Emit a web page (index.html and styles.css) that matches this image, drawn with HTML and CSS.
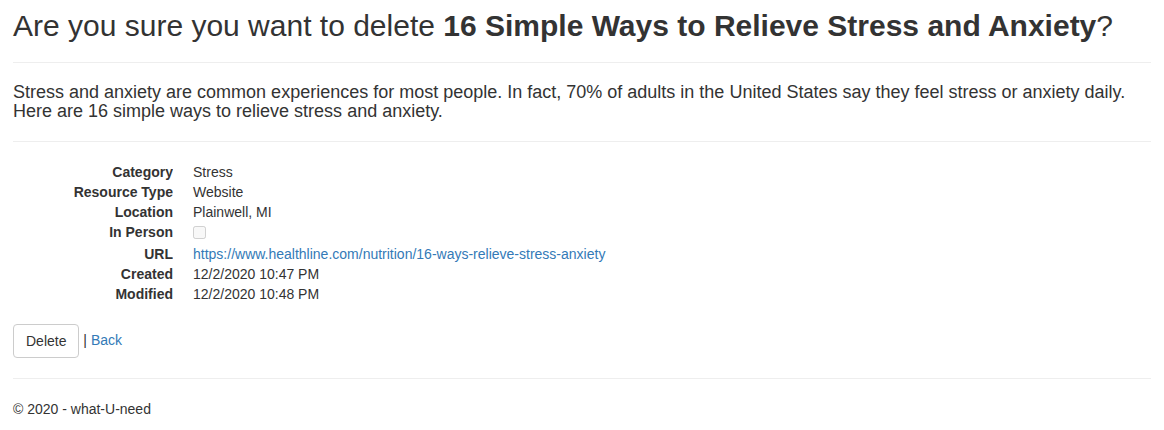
FILE: index.html
```html
<!DOCTYPE html>
<html>
<head>
<meta charset="utf-8">
<title>Delete</title>
<link rel="stylesheet" href="styles.css">
</head>
<body>
<div class="page">
  <h2 class="title">Are you sure you want to delete <strong>16 Simple Ways to Relieve Stress and Anxiety</strong>?</h2>
  <hr>
  <h4 class="desc">Stress and anxiety are common experiences for most people. In fact, 70% of adults in the United States say they feel stress or anxiety daily. Here are 16 simple ways to relieve stress and anxiety.</h4>
  <hr>
  <dl class="details">
    <dt>Category</dt><dd>Stress</dd>
    <dt>Resource Type</dt><dd>Website</dd>
    <dt>Location</dt><dd>Plainwell, MI</dd>
    <dt>In Person</dt><dd><input class="check" type="checkbox" disabled></dd>
    <dt>URL</dt><dd><a href="#">https://www.healthline.com/nutrition/16-ways-relieve-stress-anxiety</a></dd>
    <dt>Created</dt><dd>12/2/2020 10:47 PM</dd>
    <dt>Modified</dt><dd>12/2/2020 10:48 PM</dd>
  </dl>
  <form class="actions">
    <button type="button" class="btn">Delete</button> | <a href="#">Back</a>
  </form>
  <hr>
  <footer class="footer">
    <p>&copy; 2020 - what-U-need</p>
  </footer>
</div>
</body>
</html>
```

FILE: styles.css
```css
html, body {
  margin: 0;
  padding: 0;
  background: #fff;
}
body {
  font-family: "Liberation Sans", Arial, sans-serif;
  font-size: 14px;
  line-height: 1.42857143;
  color: #333;
}
.page {
  padding: 9px 13px 0 13px;
}
.title {
  font-size: 30px;
  font-weight: 500;
  line-height: 1.1;
  margin: 0 0 10px 0;
}
.title strong {
  font-weight: 700;
}
hr {
  margin: 20px 0;
  border: 0;
  border-top: 1px solid #eee;
  height: 0;
}
.desc {
  font-size: 18px;
  font-weight: 500;
  line-height: 19px;
  margin: 10px 0 10px 0;
}
.details {
  margin: 0 0 20px 0;
}
.details dt {
  float: left;
  clear: left;
  width: 160px;
  text-align: right;
  font-weight: 700;
  overflow: hidden;
  white-space: nowrap;
  text-overflow: ellipsis;
}
.details dd {
  margin-left: 180px;
}
.details dd::after {
  content: "";
  display: table;
  clear: both;
}
.check {
  margin: 4px 0 0;
  line-height: normal;
  width: 13px;
  height: 13px;
}
a {
  color: #337ab7;
  text-decoration: none;
}
.actions {
  margin: 0;
}
.btn {
  font-family: inherit;
  font-size: 14px;
  line-height: 1.42857143;
  color: #333;
  background: #fff;
  border: 1px solid #ccc;
  border-radius: 4px;
  padding: 6px 12px;
  margin: 0;
  vertical-align: middle;
  cursor: pointer;
}
.footer p {
  margin: 0 0 10px 0;
  font-size: 14px;
}
```
